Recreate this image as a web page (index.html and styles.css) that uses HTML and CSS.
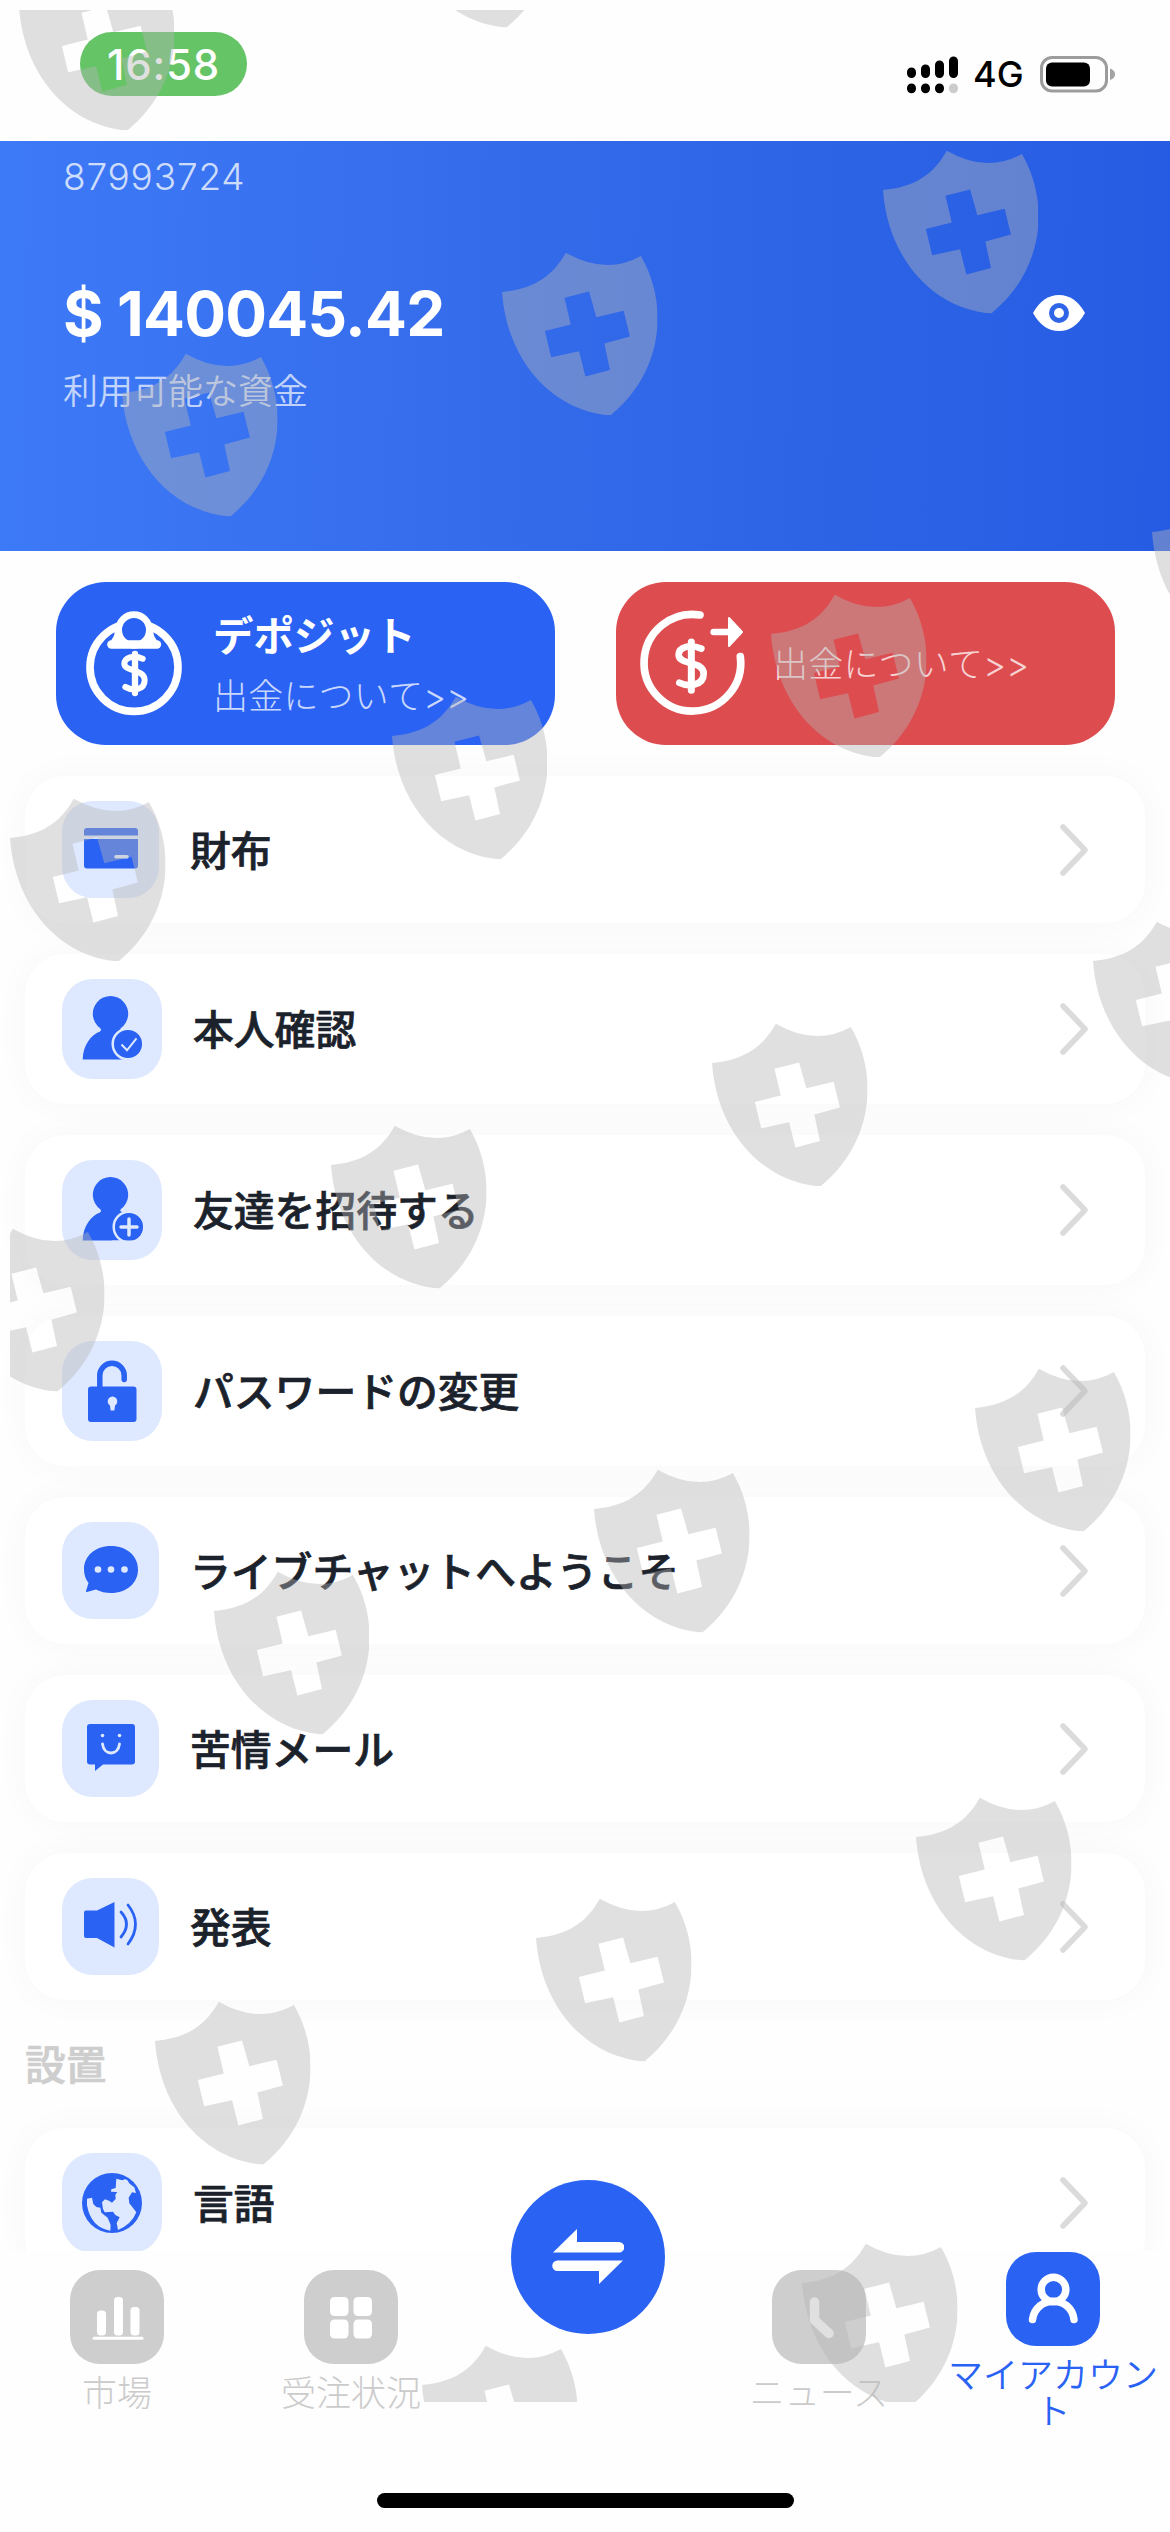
FILE: index.html
```html
<!DOCTYPE html>
<html lang="ja">
<head>
<meta charset="utf-8">
<title>マイアカウント</title>
<link rel="stylesheet" href="styles.css">
</head>
<body>
<svg class="defs" aria-hidden="true">
  <symbol id="chevron" viewBox="0 0 30 54"><path d="M4 4 26 27 4 50" fill="none" stroke="#dbdbdb" stroke-width="5.6" stroke-linecap="round" stroke-linejoin="round"/></symbol>
  <symbol id="shield" viewBox="66 36 468 492"><path fill-rule="evenodd" d="M66 156C160 148 218 110 258 38Q379 107 484 48C570 195 550 400 392 528C215 515 80 360 66 156ZM254 174 273 254 195 274 214 353 298 335 317 411 391 391 374 311 451 290 432 213 350 232 328 155Z"/></symbol>
</svg>
<div class="screen">
  <header class="status">
    <span class="clock">16:58</span>
    <div class="signals">
      <svg class="bars" width="52" height="38" viewBox="0 0 52 38">
        <g stroke="#000" stroke-width="9" stroke-linecap="round"><path d="M4.500 16v1.500M18.500 13v4.500M32.500 9v8.500M46.500 5v12.500"/><path d="M4.500 32v.8M18.500 32v.8M32.500 32v.8"/><path d="M46.500 32v.8" stroke="#ccc"/></g>
      </svg>
      <span class="network">4G</span>
      <svg class="battery" width="76" height="37" viewBox="0 0 76 37">
        <rect x="1.500" y="1.500" width="65" height="33.500" rx="10.500" fill="none" stroke="#9c9c9c" stroke-width="3"/>
        <rect x="6" y="6.500" width="44" height="24" rx="6"/><path d="M70 12.500q5 1.500 5 5.700t-5 5.800z" fill="#a3a3a3"/>
      </svg>
    </div>
  </header>

  <section class="summary">
    <div class="uid">87993724</div>
    <div class="balance-row">
      <div class="balance">$ 140045.42</div>
      <svg width="54" height="38" viewBox="0 0 54 38"><path d="M1 19Q11 1 27 1T53 19Q43 37 27 37T1 19Z" fill="#fff"/><circle cx="27" cy="19" r="7.500" fill="#fff" stroke="#2f66e8" stroke-width="5"/></svg>
    </div>
    <div class="available">利用可能な資金</div>
  </section>

  <main class="content">
    <div class="actions">
      <div class="action deposit">
        <svg width="110" height="120" viewBox="0 0 330 360" fill="none" stroke="#fff" stroke-linecap="round" stroke-linejoin="round">
          <circle cx="162" cy="202" r="132" stroke-width="23"/>
          <circle cx="162" cy="90" r="46" fill="#2a63f4" stroke-width="20"/>
          <path d="M113 92q2 17-10 32M211 92q-2 17 10 32" stroke-width="19"/>
          <path d="M94 133.500H231" stroke-width="25"/>
          <path d="M165 162V279" stroke-width="19"/>
          <path d="M188 176C160 163 133 173 133 192C133 214 194 207 194 240C194 270 160 274 136 261" stroke-width="18"/>
        </svg>
        <div class="action-text"><strong>デポジット</strong><span>出金について&gt;&gt;</span></div>
      </div>
      <div class="action withdraw">
        <svg width="110" height="120" viewBox="0 0 330 360" fill="none" stroke="#fff" stroke-linecap="round" stroke-linejoin="round">
          <path d="M180 45A145 145 0 1 0 301 170" stroke-width="23"/>
          <path d="M221 96H270" stroke-width="20"/>
          <path d="M267 54 306 96 267 138Z" fill="#fff" stroke-width="6"/>
          <path d="M154 126V271" stroke-width="21"/>
          <path d="M184 146C150 131 116 141 116 164C116 197 191 181 191 221C191 256 147 262 118 248" stroke-width="20"/>
        </svg>
        <div class="action-text"><span>出金について&gt;&gt;</span></div>
      </div>
    </div>

    <nav class="menu">
      <a class="row small"><svg class="tile" viewBox="0 0 97 97"><path d="M22 34.500V30a3 3 0 0 1 3-3H73a3 3 0 0 1 3 3v4.500zM22 38H76V64.500a3 3 0 0 1-3 3H25a3 3 0 0 1-3-3z"/><path d="M54 55.700H65" stroke="#dee8fe" stroke-width="3.500" stroke-linecap="round"/></svg><span>財布</span><svg class="go"><use href="#chevron"/></svg></a>
      <a class="row"><svg class="tile" viewBox="0 0 100 100"><path d="M20.700 80.500C21 66 29 56 38 52.500Q40 51 38 49A17.700 17.700 0 1 1 59 49Q57 51 60 52L66 56V80.500Z"/><circle cx="66" cy="65" r="15.300" stroke="#dee8fe" stroke-width="2.500"/><path d="m59.500 65.500 5.500 5.800 9.500-12" fill="none" stroke="#dee8fe" stroke-width="2"/></svg><span>本人確認</span><svg class="go"><use href="#chevron"/></svg></a>
      <a class="row"><svg class="tile" viewBox="0 0 100 100"><path d="M20.700 80.500C21 66 29 56 38 52.500Q40 51 38 49A17.700 17.700 0 1 1 59 49Q57 51 60 52L66 56V80.500Z"/><circle cx="67" cy="67" r="15.300" stroke="#dee8fe" stroke-width="2.500"/><path d="M59 67H75M67 59V75" fill="none" stroke="#dee8fe" stroke-width="3.500" stroke-linecap="round"/><path d="M50 80.500H85V86H50z" fill="#dee8fe"/></svg><span>友達を招待する</span><svg class="go"><use href="#chevron"/></svg></a>
      <a class="row"><svg class="tile" viewBox="0 0 100 100"><rect x="26" y="45.500" width="48.500" height="35.500" rx="3"/><path d="M37.800 47V34.500a12.200 12.200 0 0 1 24.400 0V38.500" fill="none" stroke="#2a63f4" stroke-width="5.500" stroke-linecap="round"/><path d="M48 64.500a4.800 4.800 0 1 1 5 0l-.6 5h-3.800z" fill="#dee8fe"/></svg><span>パスワードの変更</span><svg class="go"><use href="#chevron"/></svg></a>
      <a class="row small"><svg class="tile" viewBox="0 0 97 97"><path d="M49 24C65 24 76 34 76 47.500S65 71 49 71Q41 71 34 67.500L25 70Q23.500 70.200 24 69L26.500 61Q22 55 22 47.500C22 34 33 24 49 24Z"/><g fill="#dee8fe"><circle cx="36" cy="47.500" r="3.300"/><circle cx="49" cy="47.500" r="3.300"/><circle cx="62.500" cy="47.500" r="3.300"/></g></svg><span>ライブチャットへようこそ</span><svg class="go"><use href="#chevron"/></svg></a>
      <a class="row small"><svg class="tile" viewBox="0 0 97 97"><path d="M28 24H70a3 3 0 0 1 3 3V61.500a3 3 0 0 1-3 3H41L33 71V64.500H28a3 3 0 0 1-3-3V27a3 3 0 0 1 3-3Z"/><circle cx="40.500" cy="35.500" r="1.800" fill="#dee8fe"/><circle cx="57.500" cy="35.500" r="1.800" fill="#dee8fe"/><path d="M40.500 44C42 56 56 56 57.500 44" fill="none" stroke="#dee8fe" stroke-width="2.800" stroke-linecap="round"/></svg><span>苦情メール</span><svg class="go"><use href="#chevron"/></svg></a>
      <a class="row small"><svg class="tile" viewBox="0 0 97 97"><path d="M24 32.500H35L52.500 24V69.500L35 60H24a2 2 0 0 1-2-2V34.500a2 2 0 0 1 2-2Z"/><path d="M59 34Q70 46 59 59M66 27Q81 46 66 66" fill="none" stroke="#2a63f4" stroke-width="2.800" stroke-linecap="round"/></svg><span>発表</span><svg class="go"><use href="#chevron"/></svg></a>
    </nav>

    <h2 class="section-title">設置</h2>
    <nav class="menu">
      <a class="row"><svg class="tile" viewBox="0 0 300 300"><circle cx="150" cy="150" r="90"/><path fill="#dee8fe" d="M163 77Q175 80 183 82 188 76 196 82L203 92 217 103 222 120 210 118 200 134 202 151 215 167 223 178Q209 214 168 231L164 210 173 193 160 186 153 176 128 178 123 168 120 148 129 139 141 143 150 149 161 138 160 125 166 117 147 116 148 109 161 105ZM75 137 90 134 94 153 103 162 115 164 118 179 137 194 146 216 145 233Q87 224 75 157Z"/></svg><span>言語</span><svg class="go"><use href="#chevron"/></svg></a>
    </nav>
  </main>

  <footer class="tabbar">
    <div class="tabs">
      <a class="tab"><svg class="tab-icon" viewBox="0 0 94 94"><g fill="#fff"><rect x="27" y="40.500" width="9" height="25" rx="3.500"/><rect x="44" y="27" width="9" height="38.500" rx="3.500"/><rect x="60.500" y="37" width="9" height="28.500" rx="3.500"/></g><path d="M24 68.200H72" stroke="#fff" stroke-width="3" stroke-linecap="round"/></svg><span>市場</span></a>
      <a class="tab"><svg class="tab-icon" viewBox="0 0 94 94" fill="#fff"><rect x="26" y="27" width="18.500" height="19" rx="4.500"/><rect x="49.500" y="27" width="18.500" height="19" rx="4.500"/><rect x="26" y="49.500" width="18.500" height="19" rx="4.500"/><rect x="49.500" y="49.500" width="18.500" height="19" rx="4.500"/></svg><span>受注状況</span></a>
      <a class="trade"><svg width="72" height="56" viewBox="0 0 72 56" fill="#fff"><path d="M1 23.500 25 0V13H67a5 5 0 0 1 0 10.500ZM71 31.500 47 55V42H5.500a5 5 0 0 1 0-10.500Z"/></svg></a>
      <a class="tab"><svg class="tab-icon" viewBox="0 0 94 94"><path d="M42.500 32V50L57 63.500" fill="none" stroke="#fff" stroke-width="9.500" stroke-linecap="round" stroke-linejoin="round"/></svg><span>ニュース</span></a>
      <a class="tab active"><svg class="tab-icon" viewBox="0 0 94 94" fill="none" stroke="#fff" stroke-width="7.500" stroke-linecap="round"><circle cx="47.500" cy="37.500" r="12.300"/><path d="M26.500 67.500C30 43 65 43 68 67.500"/></svg><span>マイアカウント</span></a>
    </div>
    <div class="home-bar"></div>
  </footer>

  <div class="watermark" aria-hidden="true">
    <svg style="left:8.700px;top:-42.500px"><use href="#shield"/></svg>
    <svg style="left:388px;top:-145px"><use href="#shield"/></svg>
    <svg style="left:872.500px;top:141px"><use href="#shield"/></svg>
    <svg style="left:492px;top:242.500px"><use href="#shield"/></svg>
    <svg style="left:112.400px;top:344px"><use href="#shield"/></svg>
    <svg style="left:1142px;top:483px"><use href="#shield"/></svg>
    <svg style="left:761px;top:584.500px"><use href="#shield"/></svg>
    <svg style="left:381.500px;top:687px"><use href="#shield"/></svg>
    <svg style="left:0;top:788.500px"><use href="#shield"/></svg>
    <svg style="left:1083px;top:912px"><use href="#shield"/></svg>
    <svg style="left:702.300px;top:1013.500px"><use href="#shield"/></svg>
    <svg style="left:321px;top:1116px"><use href="#shield"/></svg>
    <svg style="left:-61px;top:1219px"><use href="#shield"/></svg>
    <svg style="left:965px;top:1358.500px"><use href="#shield"/></svg>
    <svg style="left:584px;top:1460px"><use href="#shield"/></svg>
    <svg style="left:203.500px;top:1562px"><use href="#shield"/></svg>
    <svg style="left:906px;top:1788px"><use href="#shield"/></svg>
    <svg style="left:526px;top:1889px"><use href="#shield"/></svg>
    <svg style="left:145px;top:1992px"><use href="#shield"/></svg>
    <svg style="left:792px;top:2233.500px"><use href="#shield"/></svg>
    <svg style="left:411.500px;top:2335.500px"><use href="#shield"/></svg>
  </div>
</div>
</body>
</html>
```

FILE: styles.css
```css
* { box-sizing: border-box; margin: 0; padding: 0; }
body { background: #fefefe; font-family: Inter, "Noto Sans CJK JP", sans-serif; }
.defs { position: absolute; width: 0; height: 0; }
.screen { position: relative; display: flex; flex-direction: column; width: 1170px; height: 2532px; overflow: hidden; background: #fefefe; }

.status { display: flex; justify-content: space-between; align-items: flex-start; height: 141px; padding: 32px 54px 0 80px; }
.clock { width: 167px; height: 64px; border-radius: 32px; background: #65c466; color: #fff; font-size: 42px; font-weight: 500; letter-spacing: 0.8px; line-height: 65px; text-align: center; }
.signals { display: flex; align-items: center; margin-top: 23px; height: 39px; }
.network { width: 56px; margin-left: 14px; font-size: 36px; font-weight: 500; line-height: 39px; }
.battery { margin-left: 11px; }

.summary { height: 410px; padding: 14px 84px 0 63px; background: linear-gradient(91deg, #3d7af7 0%, #356ceb 40%, #2d64e6 70%, #265ce3 100%); color: #fff; }
.uid { font-size: 37px; font-weight: 300; letter-spacing: 0.8px; line-height: 44px; color: rgba(255,255,255,.76); }
.balance-row { display: flex; justify-content: space-between; align-items: center; height: 76px; margin-top: 76px; }
.balance { font-size: 62px; font-weight: 700; letter-spacing: -0.7px; }
.available { margin-top: 17px; font-size: 35px; font-weight: 350; line-height: 46px; color: rgba(255,255,255,.7); }

.content { height: 1700px; padding: 31px 25px 0; overflow: hidden; }
.actions { display: flex; justify-content: space-between; padding: 0 30px 0 31px; }
.action { display: flex; align-items: center; gap: 23px; width: 499px; height: 163px; padding-left: 24px; border-radius: 50px; color: #fff; }
.deposit { background: #2a63f4; }
.withdraw { background: #dd4c4f; }
.action svg { overflow: visible; margin-top: -7px; }
.action-text { display: flex; flex-direction: column; gap: 13px; }
.action-text strong { font-size: 40.500px; font-weight: 600; line-height: 46px; }
.action-text span { font-size: 35px; font-weight: 300; letter-spacing: 0.2px; line-height: 46px; color: rgba(255,255,255,.76); }
.deposit .action-text { margin-top: 6px; }

.menu { display: flex; flex-direction: column; gap: 31px; margin-top: 31px; }
.row { display: flex; align-items: center; height: 150px; padding: 0 56px 0 37px; border-radius: 40px; background: #fff; box-shadow: 0 0 36px rgba(0,0,0,.032); color: #1b222b; font-size: 40.800px; font-weight: 500; -webkit-text-stroke: 0.7px currentColor; }
.row.small { height: 147px; }
.row span { flex: 1; margin: 2px 0 0 31px; line-height: 60px; }
.tile { width: 100px; height: 100px; border-radius: 31px; background: #dee8fe; fill: #2a63f4; }
.small .tile { width: 97px; height: 97px; }
.go { width: 30px; height: 54px; }
.section-title { margin-top: 36px; font-size: 40.700px; font-weight: 500; line-height: 60px; color: #cecece; -webkit-text-stroke: 0.7px currentColor; }
.section-title + .menu { margin-top: 32px; }

.tabbar { position: relative; display: flex; flex-direction: column; height: 281px; background: #fefefe; }
.tabs { display: grid; grid-template-columns: repeat(5, 234px); height: 242px; }
.tab { display: flex; flex-direction: column; align-items: center; padding: 19px 12px 0; color: #cbcbcb; text-align: center; font-size: 35px; font-weight: 300; line-height: 36px; }
.tab-icon { flex: none; width: 94px; height: 94px; border-radius: 30px; background: #cecece; }
.tab span { margin-top: 11px; }
.tab.active { padding: 1px 12px 0; color: #2a63f4; font-weight: 350; }
.active .tab-icon { background: #2a63f4; }
.trade { display: flex; align-items: center; justify-content: center; justify-self: center; width: 154px; height: 154px; margin: -71px 0 0 5px; border-radius: 50%; background: #2a63f4; }
.home-bar { align-self: center; width: 417px; height: 15px; border-radius: 8px; background: #000; }

.watermark { position: absolute; inset: 10px 0 130px 10px; overflow: hidden; }
.watermark svg { position: absolute; width: 155.500px; height: 163.500px; margin-top: -0.700px; fill: rgba(180,180,180,.42); }
```
